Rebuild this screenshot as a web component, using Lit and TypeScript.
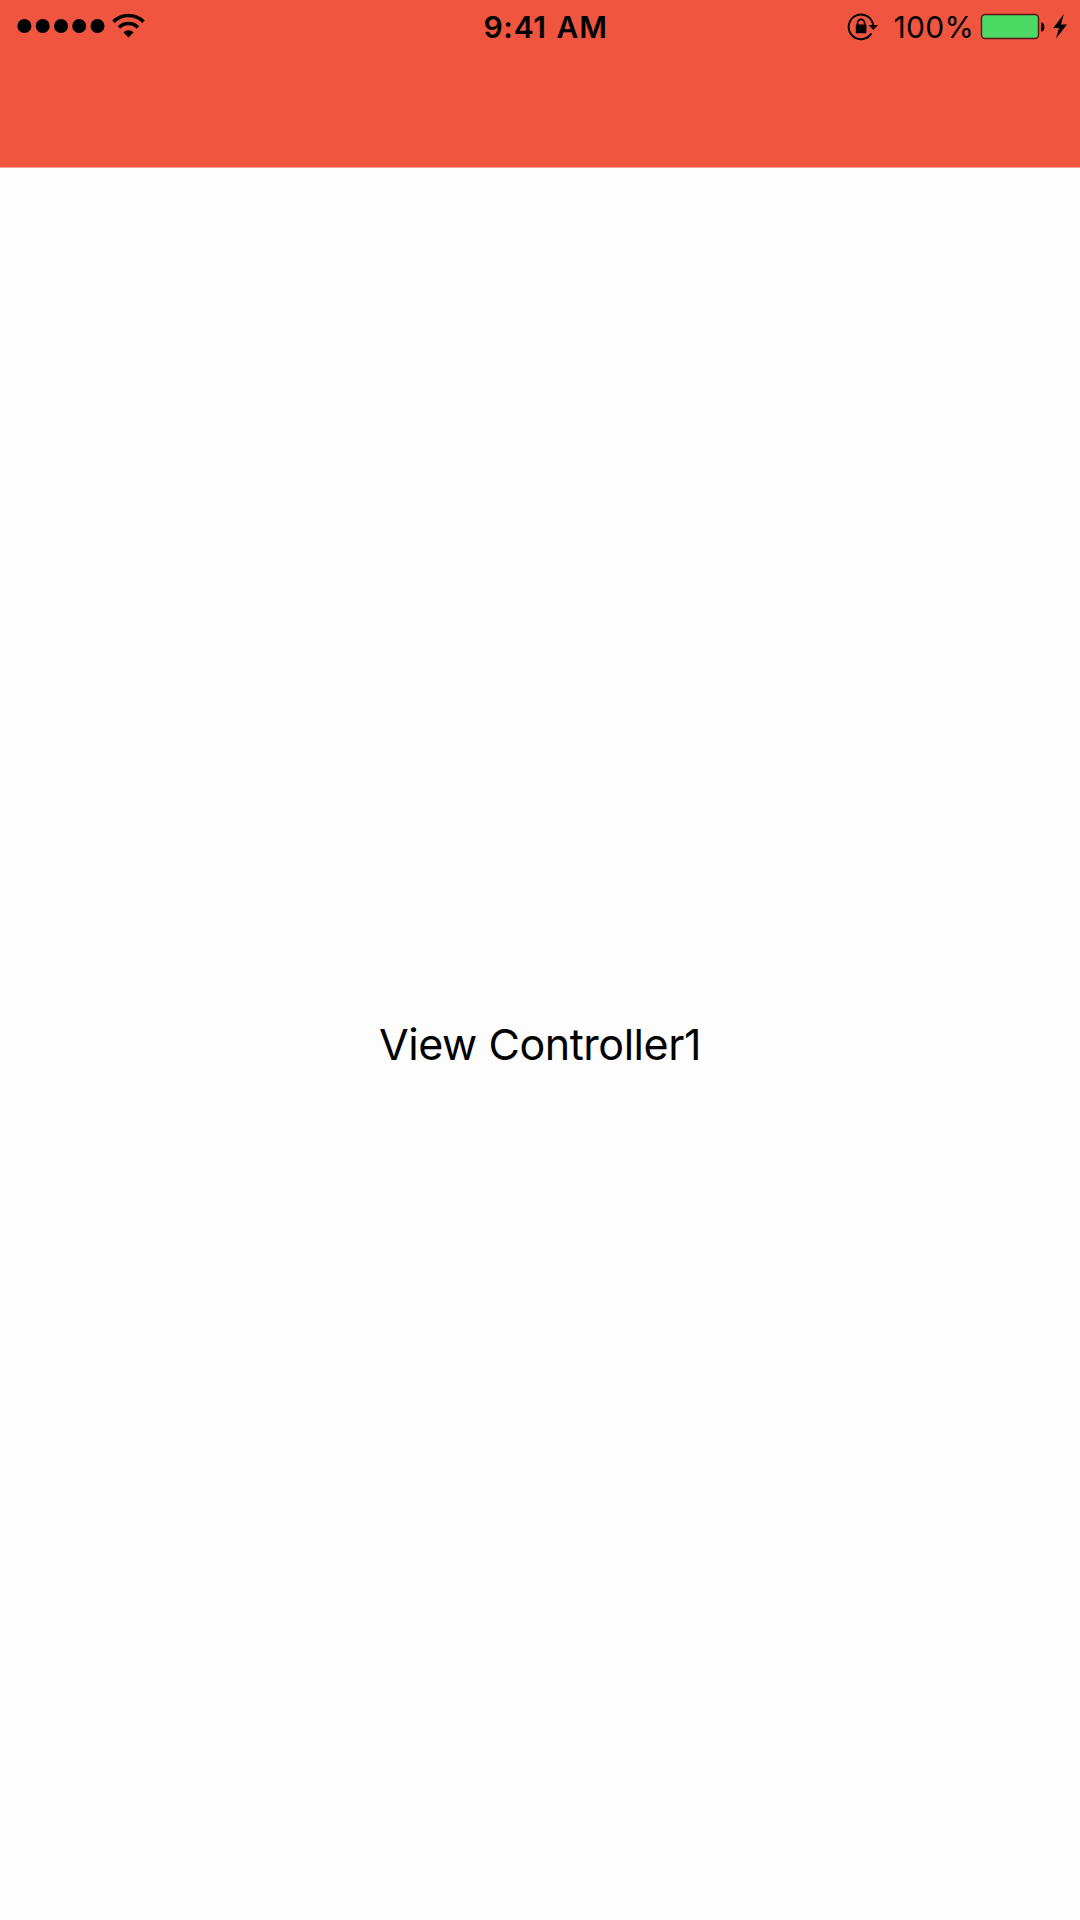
import { LitElement, html, css } from "lit";
import { customElement } from "lit/decorators.js";

@customElement("status-bar")
class StatusBar extends LitElement {
  static styles = css`
    :host {
      display: grid;
      grid-template-columns: 1fr auto 1fr;
      height: 54px;
      color: #000;
    }
    .left,
    .right {
      display: flex;
      align-items: flex-start;
    }
    .right {
      justify-content: flex-end;
    }
    .time,
    .percent {
      font-size: 30px;
      line-height: 55px;
      white-space: pre;
    }
    .time {
      font-weight: 600;
      padding-left: 11px;
      letter-spacing: 0.7px;
      word-spacing: 1.6px;
    }
    .percent {
      margin-right: 5.7px;
      letter-spacing: 0.3px;
    }
    svg {
      display: block;
    }
  `;
  render() {
    return html`
      <div class="left">
        <svg width="160" height="54" viewBox="0 0 160 54">
          <circle cx="24.4" cy="26" r="7" />
          <circle cx="42.7" cy="26" r="7" />
          <circle cx="61" cy="26" r="7" />
          <circle cx="79.2" cy="26" r="7" />
          <circle cx="97.5" cy="26" r="7" />
          <g fill="none" stroke="#000" stroke-width="3.6">
            <path d="M113.5 21.8A21 21 0 0 1 143.5 21.8" />
            <path d="M119 27.4A13.4 13.4 0 0 1 138 27.4" />
          </g>
          <path d="M128.5 37.5L123.4 32.3A7.4 7.4 0 0 1 133.6 32.3Z" />
        </svg>
      </div>
      <div class="time">9:41 AM</div>
      <div class="right">
        <svg width="49" height="54" viewBox="844 0 49 54">
          <path d="M870.4 33.4A12.3 12.3 0 1 1 872.2 25.5" fill="none" stroke="#000" stroke-width="2" />
          <path d="M867.6 25H877L872.3 30Z" />
          <rect x="854.8" y="24.4" width="10.6" height="8.9" rx="0.6" />
          <path d="M856.6 25V22.8A3.5 3.5 0 0 1 863.6 22.8V25" fill="none" stroke="#000" stroke-width="1.7" />
        </svg>
        <span class="percent">100%</span>
        <svg width="100" height="54" viewBox="980 0 100 54">
          <rect x="981.5" y="14.5" width="57" height="24" rx="3.5" fill="#4cd964" stroke="#541410" stroke-width="1.4" />
          <path d="M1041 22.5A3.4 4.5 0 0 1 1041 31.5Z" />
          <path d="M1063.8 14L1053.3 28H1059L1056 38.5L1067 24.5H1061Z" />
        </svg>
      </div>
    `;
  }
}

@customElement("app-root")
class AppRoot extends LitElement {
  static styles = css`
    :host {
      display: flex;
      flex-direction: column;
      height: 1920px;
      background: #fdfdfe;
      font-family: Inter, "Liberation Sans", sans-serif;
      color: #000;
    }
    .header {
      height: 167px;
      background: #f05540;
      border-bottom: 1px solid #f3a39b;
    }
    .content {
      flex: 1;
      display: flex;
      align-items: center;
      justify-content: center;
      padding-bottom: 1px;
    }
    .label {
      font-size: 43px;
      line-height: 52px;
      letter-spacing: -0.45px;
      white-space: nowrap;
    }
  `;
  render() {
    return html`
      <div class="header"><status-bar></status-bar></div>
      <div class="content"><div class="label">View Controller1</div></div>
    `;
  }
}
